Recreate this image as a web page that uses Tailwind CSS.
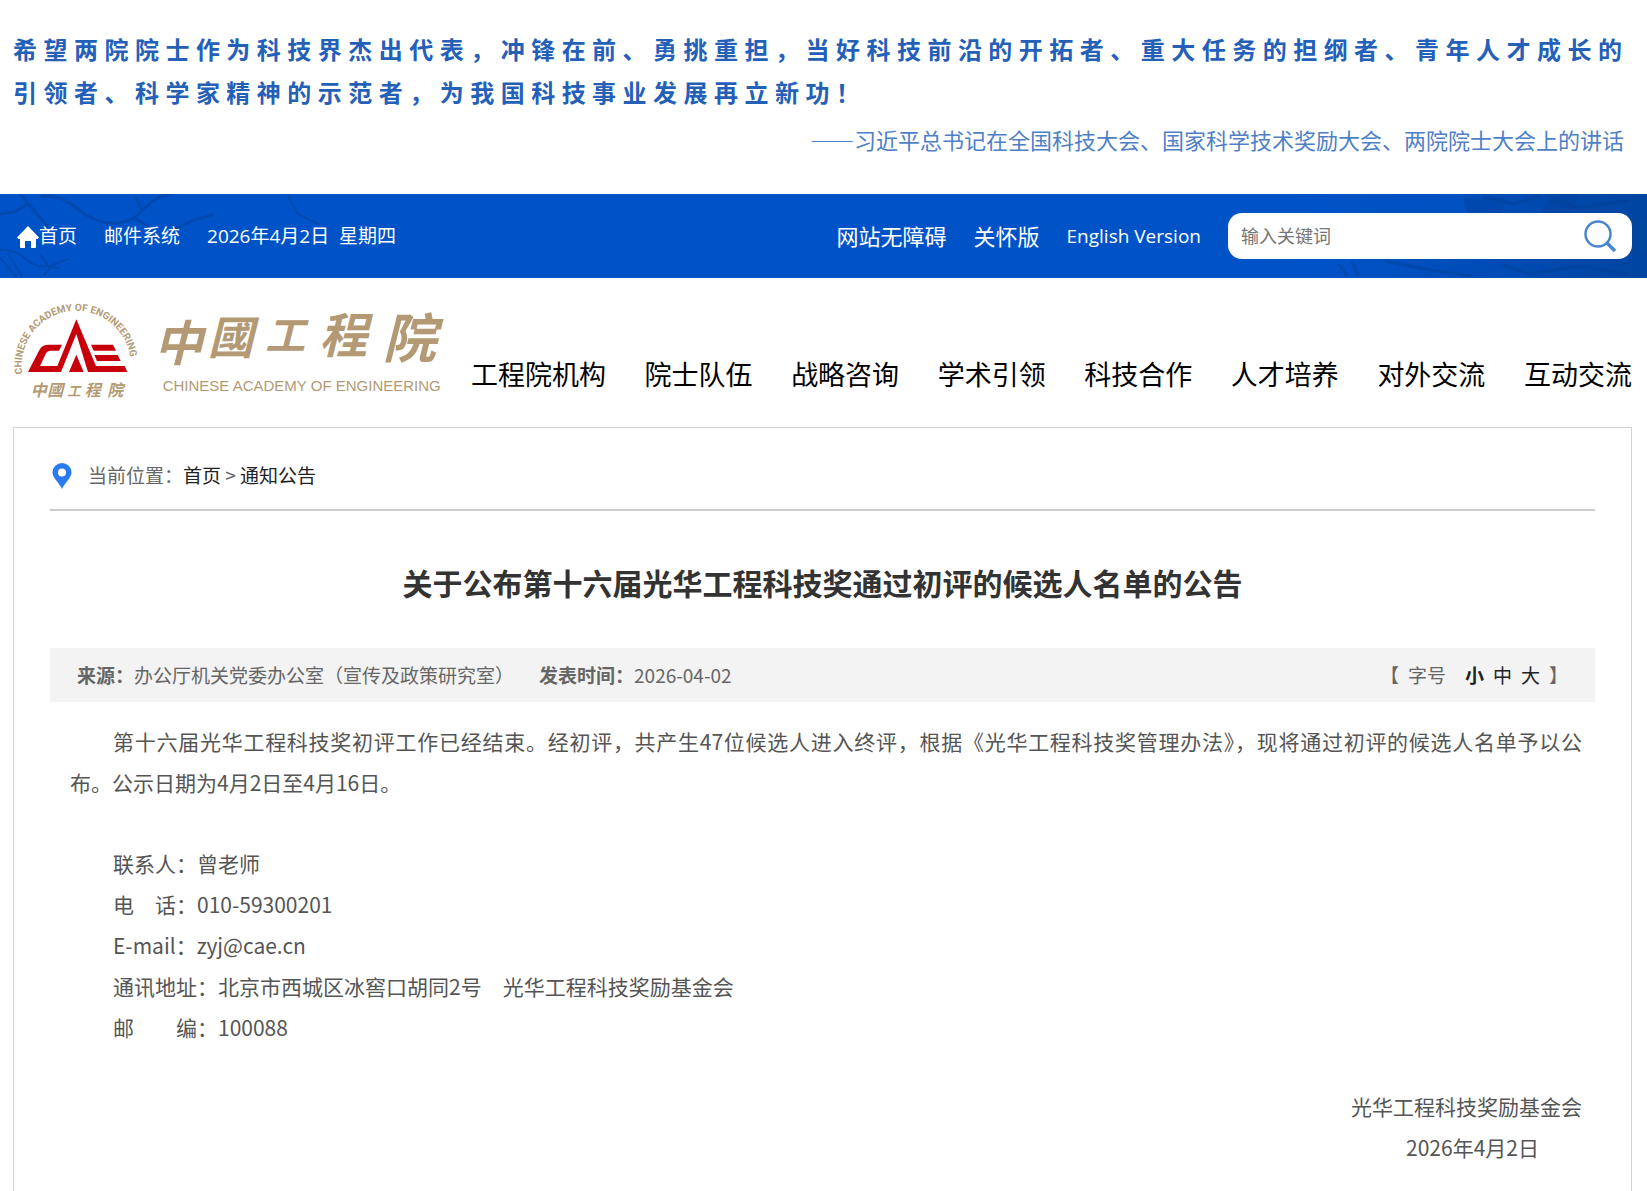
<!DOCTYPE html>
<html lang="zh-CN">
<head>
  <meta charset="UTF-8">
  <meta name="viewport" content="width=device-width, initial-scale=1.0">
  <title>关于公布第十六届光华工程科技奖通过初评的候选人名单的公告</title>
  <script src="https://cdn.jsdelivr.net/npm/@tailwindcss/browser@4"></script>
</head>
<body class="bg-white font-['Noto_Sans_CJK_SC',sans-serif] text-[#555]">

  <!-- Slogan -->
  <div class="px-[13px] pt-[27px] pb-[33px] text-[#2460b8]">
    <p class="text-[24px] leading-[43px] font-bold tracking-[0.27em]">希望两院院士作为科技界杰出代表，冲锋在前、勇挑重担，当好科技前沿的开拓者、重大任务的担纲者、青年人才成长的<br>引领者、科学家精神的示范者，为我国科技事业发展再立新功！</p>
    <p class="mt-[5px] pr-[10px] text-right text-[22px] leading-[43px] text-[#4f7fc7]">——习近平总书记在全国科技大会、国家科学技术奖励大会、两院院士大会上的讲话</p>
  </div>

  <!-- Top bar -->
  <div class="relative h-[84px] bg-[#0053c7] font-['Open_Sans','Noto_Sans_CJK_SC',sans-serif] text-white">
    <svg class="absolute left-0 top-0" width="330" height="84" viewBox="0 0 330 84" fill="none" stroke="#00439f" stroke-opacity=".6" stroke-linecap="round" aria-hidden="true">
      <path d="M20 0 32 14 47 32M0 20l14-2 14-8M42 2c28 0 34 14 46 20 14 8 30 10 46 2 12-10 20-22 38-24M134 24l14 8M142 16l-6-12M172 36l22-10 18-5" stroke-width="3"/>
      <path d="M0 56c10 0 20 2 27 10 8 6 14 8 20 6l12 2M40 60l10 14-6 7M50 72l18-7M0 64l16 18M8 60l14 22M288 2l10 18 20 10" stroke-width="2"/>
    </svg>
    <svg class="absolute right-0 top-0" width="360" height="84" viewBox="0 0 360 84" aria-hidden="true">
      <defs>
        <linearGradient id="shade"><stop offset="0" stop-color="#0053c7"/><stop offset=".6" stop-color="#004fc0"/><stop offset="1" stop-color="#0048a6"/></linearGradient>
        <linearGradient id="haze"><stop offset="0" stop-color="#00429a" stop-opacity="0"/><stop offset="1" stop-color="#00429a" stop-opacity=".5"/></linearGradient>
      </defs>
      <path d="M0 0h360v84H0z" fill="url(#shade)"/>
      <path d="M178 0h182v19H182l-5-10zM60 65h300v19H60zM345 15h15v60h-15z" fill="url(#haze)"/>
      <path d="M176 4h44l-6 15h-34zM262 0h30l-8 19h-30z" fill="#00429a" fill-opacity=".35"/>
      <path d="M52 70l8 12M65 67l6 15M98 67l46 9 40 6M196 2l30 8 28-8M262 6l30 8 50-8M214 70l28 10 50-8 50 8" fill="none" stroke="#003e91" stroke-opacity=".4" stroke-width="3"/>
    </svg>
    <div class="relative flex h-full items-center justify-between pl-[17px] pr-[15px]">
      <div class="flex items-center gap-[27px] text-[19px]">
        <a href="#" class="flex items-center">
          <svg class="mt-[2px]" width="22" height="22" viewBox="0 0 22 22" fill="#fff" aria-hidden="true"><path d="M11 0 22 11.500 20.500 13H19v8q0 1-1 1h-4v-7H8v7H4q-1 0-1-1v-8H1.500L0 11.500z"/></svg>
          <span>首页</span>
        </a>
        <a href="#">邮件系统</a>
        <span class="whitespace-pre">2026年4月2日  星期四</span>
      </div>
      <div class="flex items-center gap-[27px] text-[22px]">
        <a href="#">网站无障碍</a>
        <a href="#">关怀版</a>
        <a href="#" class="text-[19px] font-medium">English Version</a>
        <form class="flex h-[46px] w-[404px] items-center rounded-[14px] bg-white pl-[13px] pr-[15px]">
          <input type="text" aria-label="输入关键词" placeholder="输入关键词" class="min-w-0 flex-1 text-[18px] outline-none placeholder:text-[#757575]">
          <button type="button" aria-label="搜索">
            <svg width="34" height="34" viewBox="0 0 34 34" fill="none" stroke="#4a86cf" aria-hidden="true"><circle cx="15" cy="15" r="12.500" stroke-width="2.500"/><path d="m24 24 8 8" stroke-width="3.500"/></svg>
          </button>
        </form>
      </div>
    </div>
  </div>

  <!-- Logo and main navigation -->
  <header class="flex items-start pt-[12px] pr-[15px] pl-[13px]">
    <a href="#" aria-label="中国工程院">
      <svg width="436" height="130" viewBox="39 0 1308 390" fill="#b39a74">
        <path id="ring" d="M67 252A164 164 0 1 1 391 252" fill="none"/>
        <text font-family="Roboto, sans-serif" font-weight="bold" font-size="30"><textPath href="#ring">CHINESE ACADEMY OF ENGINEERING</textPath></text>
        <g fill="#c7000b">
          <path d="M84 246l34-66q8-16 28-16h40l-9 18h-26q-9 0-13 8l-18 38h52l57-140 59 140h86l8 18H264L229 132 183 246z"/>
          <path d="M229 194l22 52h-44zM273 164h66l9 18h-67zM283 195h70l9 18h-71z"/>
        </g>
        <g font-family="Noto Sans CJK TC, sans-serif" font-weight="bold" font-style="italic">
          <text font-size="48" y="317"><tspan x="92">中</tspan><tspan x="142">國</tspan><tspan x="202" font-size="40">工</tspan><tspan x="254">程</tspan><tspan x="322">院</tspan></text>
          <text><tspan x="462" y="212" font-size="146">中</tspan><tspan x="624" y="192" font-size="136">國</tspan><tspan x="796" y="180" font-size="120">工</tspan><tspan x="958" y="190" font-size="144">程</tspan><tspan x="1148" y="204" font-size="160">院</tspan></text>
        </g>
        <text font-size="45" font-family="Liberation Sans, sans-serif" x="488" y="304">CHINESE ACADEMY OF ENGINEERING</text>
      </svg>
    </a>
    <nav class="mt-[64px] ml-[22px] flex flex-1 justify-between text-[27px] leading-[40px] text-black">
      <a href="#">工程院机构</a>
      <a href="#">院士队伍</a>
      <a href="#">战略咨询</a>
      <a href="#">学术引领</a>
      <a href="#">科技合作</a>
      <a href="#">人才培养</a>
      <a href="#">对外交流</a>
      <a href="#">互动交流</a>
    </nav>
  </header>

  <!-- Article -->
  <main class="mt-[7px] mr-[15px] ml-[13px] border border-b-0 border-[#d5d5d5] px-[36px] pb-[23px]">
    <div class="flex h-[83px] items-center border-b-2 border-[#ccc] pt-[14px] text-[19px] text-[#666]">
      <svg class="mr-[16px] ml-[2px]" width="20" height="26" viewBox="0 0 19 26" aria-hidden="true"><path fill="#2b7bf0" fill-rule="evenodd" d="M9.500 0A9.500 9.500 0 0 1 19 9.500C19 15 12 20 9.500 26 7 20 0 15 0 9.500A9.500 9.500 0 0 1 9.500 0zm0 5.500a4 4 0 1 0 0 8 4 4 0 0 0 0-8z"/></svg>
      <span>当前位置：<a href="#" class="text-[#222]">首页</a> &gt; <a href="#" class="text-[#222]">通知公告</a></span>
    </div>

    <h1 class="mt-[48px] text-center text-[30px] leading-[46px] font-bold text-[#333]">关于公布第十六届光华工程科技奖通过初评的候选人名单的公告</h1>

    <div class="mt-[43px] flex h-[54px] items-center justify-between bg-[#f3f3f3] px-[27px] text-[19px] text-[#666]">
      <div class="flex gap-[25px]">
        <span><b>来源：</b>办公厅机关党委办公室（宣传及政策研究室）</span>
        <span><b>发表时间：</b>2026-04-02</span>
      </div>
      <div class="flex gap-[9px]">
        <span>【</span>
        <span class="mr-[10px]">字号</span>
        <button type="button" class="font-bold text-[#222]">小</button>
        <button type="button" class="text-[#222]">中</button>
        <button type="button" class="text-[#222]">大</button>
        <span>】</span>
      </div>
    </div>

    <div class="pt-[19px] pr-[13px] pl-[20px] text-[21px] leading-[41px]">
      <p class="indent-[43px]"><span class="block [text-align-last:justify]">第十六届光华工程科技奖初评工作已经结束。经初评，共产生47位候选人进入终评，根据《光华工程科技奖管理办法》，现将通过初评的候选人名单予以公</span><span class="block indent-0">布。公示日期为4月2日至4月16日。</span></p>
      <div class="mt-[40px] pl-[43px]">
        <p>联系人：曾老师</p>
        <p>电　话：010-59300201</p>
        <p>E-mail：zyj@cae.cn</p>
        <p>通讯地址：北京市西城区冰窖口胡同2号　光华工程科技奖励基金会</p>
        <p>邮　　编：100088</p>
      </div>
      <div class="mt-[38px] text-right">
        <p>光华工程科技奖励基金会</p>
        <p class="pr-[43px]">2026年4月2日</p>
      </div>
    </div>
  </main>
</body>
</html>
